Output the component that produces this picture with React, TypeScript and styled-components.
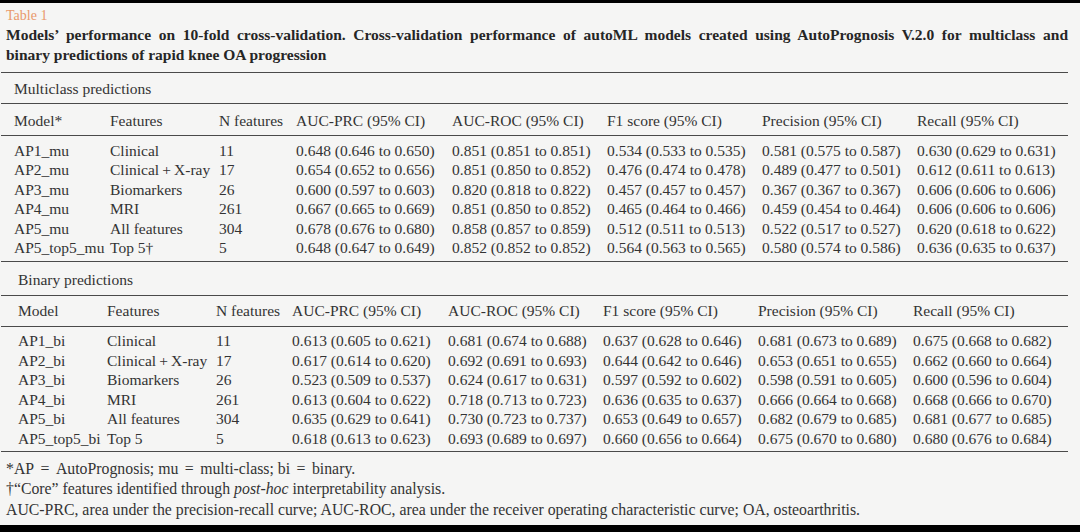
import React from "react";
import styled, { createGlobalStyle } from "styled-components";

const GlobalStyle = createGlobalStyle`
  html, body {
    margin: 0;
    padding: 0;
    background: #000;
  }
  #root {
    width: 1080px;
    height: 532px;
  }
`;

const Page = styled.div`
  width: 1080px;
  height: 532px;
  background: #000;
  padding-top: 3px;
  box-sizing: border-box;
  overflow: hidden;
`;

const Sheet = styled.div`
  height: 522px;
  box-sizing: border-box;
  background: #f5f5f4;
  padding: 3px 12px 0 1px;
  font-family: "Liberation Serif", "Times New Roman", serif;
  color: #333;
`;

const Label = styled.div`
  padding-left: 5px;
  font-size: 14px;
  line-height: 19px;
  color: #e9996b;
`;

const Caption = styled.div`
  padding-left: 5px;
  font-size: 15.5px;
  line-height: 19.5px;
  font-weight: 700;
  color: #262626;
`;

const CaptionLine = styled.div<{ $justify?: boolean }>`
  white-space: nowrap;
  text-align: ${(p) => (p.$justify ? "justify" : "left")};
  text-align-last: ${(p) => (p.$justify ? "justify" : "left")};
`;

const Table = styled.div`
  margin-top: 7.5px;
  font-size: 15.5px;
`;

const SectionTitle = styled.div<{ $indent: number; $h: number; $shift: number }>`
  height: ${(p) => p.$h - p.$shift}px;
  padding-top: ${(p) => p.$shift}px;
  display: flex;
  align-items: center;
  padding-left: ${(p) => p.$indent}px;
  border-top: 1.5px solid #4a4a4a;
`;

const Grid = styled.div<{ $cols: string; $indent: number }>`
  display: grid;
  grid-template-columns: ${(p) => p.$cols};
  padding-left: ${(p) => p.$indent}px;
  white-space: nowrap;
`;

const HeaderRow = styled(Grid)<{ $h: number; $shift: number }>`
  height: ${(p) => p.$h - p.$shift}px;
  padding-top: ${(p) => p.$shift}px;
  align-items: center;
  border-top: 1.5px solid #4a4a4a;
`;

const Body = styled.div<{ $top: number; $bottom: number }>`
  border-top: 1.5px solid #4a4a4a;
  padding-top: ${(p) => p.$top}px;
  padding-bottom: ${(p) => p.$bottom}px;
`;

const Row = styled(Grid)`
  height: 19.6px;
  align-items: center;
`;

const Cell = styled.span`
  line-height: 19.6px;
`;

const Notes = styled.div`
  border-top: 1.5px solid #4a4a4a;
  padding: 7px 0 0 5px;
  font-size: 15.8px;
  line-height: 20.5px;
`;

const NoteLine = styled.div`
  white-space: nowrap;
`;

const Eq = styled.span`
  margin: 0 2.5px;
`;

type Section = {
  title: string;
  indent: number;
  titleH: number;
  titleShift: number;
  headH: number;
  headShift: number;
  bodyTop: number;
  bodyBottom: number;
  cols: string;
  head: string[];
  rows: string[][];
};

const sections: Section[] = [
  {
    title: "Multiclass predictions",
    indent: 13,
    titleH: 30.5,
    titleShift: 2,
    headH: 30.5,
    headShift: 4,
    bodyTop: 5,
    bodyBottom: 3,
    cols: "96px 109px 77px 156px 155px 155px 155px 1fr",
    head: [
      "Model*",
      "Features",
      "N features",
      "AUC-PRC (95% CI)",
      "AUC-ROC (95% CI)",
      "F1 score (95% CI)",
      "Precision (95% CI)",
      "Recall (95% CI)",
    ],
    rows: [
      ["AP1_mu", "Clinical", "11", "0.648 (0.646 to 0.650)", "0.851 (0.851 to 0.851)", "0.534 (0.533 to 0.535)", "0.581 (0.575 to 0.587)", "0.630 (0.629 to 0.631)"],
      ["AP2_mu", "Clinical\u2009+\u2009X-ray", "17", "0.654 (0.652 to 0.656)", "0.851 (0.850 to 0.852)", "0.476 (0.474 to 0.478)", "0.489 (0.477 to 0.501)", "0.612 (0.611 to 0.613)"],
      ["AP3_mu", "Biomarkers", "26", "0.600 (0.597 to 0.603)", "0.820 (0.818 to 0.822)", "0.457 (0.457 to 0.457)", "0.367 (0.367 to 0.367)", "0.606 (0.606 to 0.606)"],
      ["AP4_mu", "MRI", "261", "0.667 (0.665 to 0.669)", "0.851 (0.850 to 0.852)", "0.465 (0.464 to 0.466)", "0.459 (0.454 to 0.464)", "0.606 (0.606 to 0.606)"],
      ["AP5_mu", "All features", "304", "0.678 (0.676 to 0.680)", "0.858 (0.857 to 0.859)", "0.512 (0.511 to 0.513)", "0.522 (0.517 to 0.527)", "0.620 (0.618 to 0.622)"],
      ["AP5_top5_mu", "Top 5\u2020", "5", "0.648 (0.647 to 0.649)", "0.852 (0.852 to 0.852)", "0.564 (0.563 to 0.565)", "0.580 (0.574 to 0.586)", "0.636 (0.635 to 0.637)"],
    ],
  },
  {
    title: "Binary predictions",
    indent: 17,
    titleH: 32.5,
    titleShift: 4,
    headH: 30,
    headShift: 1,
    bodyTop: 4.5,
    bodyBottom: 2,
    cols: "89px 109px 76px 156px 155px 155px 155px 1fr",
    head: [
      "Model",
      "Features",
      "N features",
      "AUC-PRC (95% CI)",
      "AUC-ROC (95% CI)",
      "F1 score (95% CI)",
      "Precision (95% CI)",
      "Recall (95% CI)",
    ],
    rows: [
      ["AP1_bi", "Clinical", "11", "0.613 (0.605 to 0.621)", "0.681 (0.674 to 0.688)", "0.637 (0.628 to 0.646)", "0.681 (0.673 to 0.689)", "0.675 (0.668 to 0.682)"],
      ["AP2_bi", "Clinical\u2009+\u2009X-ray", "17", "0.617 (0.614 to 0.620)", "0.692 (0.691 to 0.693)", "0.644 (0.642 to 0.646)", "0.653 (0.651 to 0.655)", "0.662 (0.660 to 0.664)"],
      ["AP3_bi", "Biomarkers", "26", "0.523 (0.509 to 0.537)", "0.624 (0.617 to 0.631)", "0.597 (0.592 to 0.602)", "0.598 (0.591 to 0.605)", "0.600 (0.596 to 0.604)"],
      ["AP4_bi", "MRI", "261", "0.613 (0.604 to 0.622)", "0.718 (0.713 to 0.723)", "0.636 (0.635 to 0.637)", "0.666 (0.664 to 0.668)", "0.668 (0.666 to 0.670)"],
      ["AP5_bi", "All features", "304", "0.635 (0.629 to 0.641)", "0.730 (0.723 to 0.737)", "0.653 (0.649 to 0.657)", "0.682 (0.679 to 0.685)", "0.681 (0.677 to 0.685)"],
      ["AP5_top5_bi", "Top 5", "5", "0.618 (0.613 to 0.623)", "0.693 (0.689 to 0.697)", "0.660 (0.656 to 0.664)", "0.675 (0.670 to 0.680)", "0.680 (0.676 to 0.684)"],
    ],
  },
];

export default function App() {
  return (
    <>
      <GlobalStyle />
      <Page>
        <Sheet>
          <Label>Table 1</Label>
          <Caption>
            <CaptionLine $justify>
              Models’ performance on 10-fold cross-validation. Cross-validation performance of autoML models created using AutoPrognosis V.2.0 for multiclass and
            </CaptionLine>
            <CaptionLine>binary predictions of rapid knee OA progression</CaptionLine>
          </Caption>
          <Table>
            {sections.map((s) => (
              <div key={s.title}>
                <SectionTitle $indent={s.indent} $h={s.titleH} $shift={s.titleShift}>
                  {s.title}
                </SectionTitle>
                <HeaderRow $cols={s.cols} $indent={s.indent} $h={s.headH} $shift={s.headShift}>
                  {s.head.map((h) => (
                    <Cell key={h}>{h}</Cell>
                  ))}
                </HeaderRow>
                <Body $top={s.bodyTop} $bottom={s.bodyBottom}>
                  {s.rows.map((r) => (
                    <Row key={r[0]} $cols={s.cols} $indent={s.indent}>
                      {r.map((c, i) => (
                        <Cell key={i}>{c}</Cell>
                      ))}
                    </Row>
                  ))}
                </Body>
              </div>
            ))}
            <Notes>
              <NoteLine>
                *AP<Eq> = </Eq>AutoPrognosis; mu<Eq> = </Eq>multi-class; bi<Eq> = </Eq>binary.
              </NoteLine>
              <NoteLine>
                †“Core” features identified through <i>post-hoc</i> interpretability analysis.
              </NoteLine>
              <NoteLine>
                AUC-PRC, area under the precision-recall curve; AUC-ROC, area under the receiver operating characteristic curve; OA, osteoarthritis.
              </NoteLine>
            </Notes>
          </Table>
        </Sheet>
      </Page>
    </>
  );
}
